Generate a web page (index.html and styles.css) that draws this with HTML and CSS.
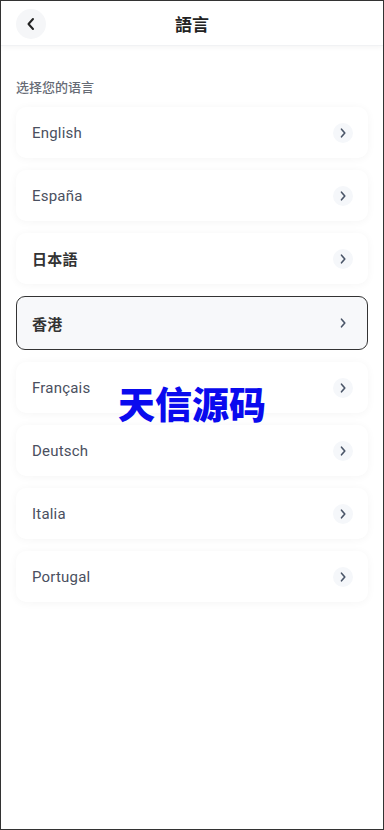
FILE: index.html
```html
<!DOCTYPE html>
<html lang="zh">
<head>
<meta charset="utf-8">
<link rel="stylesheet" href="styles.css">
</head>
<body>
<div class="frame">
  <header class="header">
    <div class="back">
      <svg width="12" height="14" viewBox="0 0 12 14"><path d="M8 2 L3.5 7 L8 12" fill="none" stroke="#222" stroke-width="2" stroke-linecap="round" stroke-linejoin="round"/></svg>
    </div>
    <h1 class="title">語言</h1>
  </header>
  <main class="content">
    <div class="label">选择您的语言</div>
    <ul class="list">
      <li class="item"><span class="name">English</span><span class="chev"><svg width="8" height="10" viewBox="0 0 8 10"><path d="M2.5 1.2 L5.8 5 L2.5 8.8" fill="none" stroke="#4a5568" stroke-width="1.6" stroke-linecap="round" stroke-linejoin="round"/></svg></span></li>
      <li class="item"><span class="name">España</span><span class="chev"><svg width="8" height="10" viewBox="0 0 8 10"><path d="M2.5 1.2 L5.8 5 L2.5 8.8" fill="none" stroke="#4a5568" stroke-width="1.6" stroke-linecap="round" stroke-linejoin="round"/></svg></span></li>
      <li class="item"><span class="name cjk">日本語</span><span class="chev"><svg width="8" height="10" viewBox="0 0 8 10"><path d="M2.5 1.2 L5.8 5 L2.5 8.8" fill="none" stroke="#4a5568" stroke-width="1.6" stroke-linecap="round" stroke-linejoin="round"/></svg></span></li>
      <li class="item selected"><span class="name cjk">香港</span><span class="chev"><svg width="8" height="10" viewBox="0 0 8 10"><path d="M2.5 1.2 L5.8 5 L2.5 8.8" fill="none" stroke="#4a5568" stroke-width="1.6" stroke-linecap="round" stroke-linejoin="round"/></svg></span></li>
      <li class="item"><span class="name">Français</span><span class="chev"><svg width="8" height="10" viewBox="0 0 8 10"><path d="M2.5 1.2 L5.8 5 L2.5 8.8" fill="none" stroke="#4a5568" stroke-width="1.6" stroke-linecap="round" stroke-linejoin="round"/></svg></span></li>
      <li class="item"><span class="name">Deutsch</span><span class="chev"><svg width="8" height="10" viewBox="0 0 8 10"><path d="M2.5 1.2 L5.8 5 L2.5 8.8" fill="none" stroke="#4a5568" stroke-width="1.6" stroke-linecap="round" stroke-linejoin="round"/></svg></span></li>
      <li class="item"><span class="name">Italia</span><span class="chev"><svg width="8" height="10" viewBox="0 0 8 10"><path d="M2.5 1.2 L5.8 5 L2.5 8.8" fill="none" stroke="#4a5568" stroke-width="1.6" stroke-linecap="round" stroke-linejoin="round"/></svg></span></li>
      <li class="item"><span class="name">Portugal</span><span class="chev"><svg width="8" height="10" viewBox="0 0 8 10"><path d="M2.5 1.2 L5.8 5 L2.5 8.8" fill="none" stroke="#4a5568" stroke-width="1.6" stroke-linecap="round" stroke-linejoin="round"/></svg></span></li>
    </ul>
  </main>
  <div class="watermark">天信源码</div>
</div>
</body>
</html>
```

FILE: styles.css
```css
* { box-sizing: border-box; }
html, body { margin: 0; padding: 0; }
body {
  width: 384px;
  height: 830px;
  font-family: Roboto, "Noto Sans CJK SC", sans-serif;
  background: #fff;
}
.frame {
  position: relative;
  width: 384px;
  height: 830px;
  border: 1px solid #333;
  background: #fff;
  overflow: hidden;
}
.header {
  height: 45px;
  display: flex;
  align-items: center;
  justify-content: center;
  position: relative;
  background: #fff;
  box-shadow: 0 1px 6px rgba(0,0,0,0.05);
  border-bottom: 1px solid #f1f2f4;
}
.back {
  position: absolute;
  left: 15px;
  top: 8px;
  width: 30px;
  height: 30px;
  border-radius: 50%;
  background: #f5f6f8;
  display: flex;
  align-items: center;
  justify-content: center;
}
.title {
  margin: 0;
  font-family: "Noto Sans CJK SC", sans-serif;
  font-size: 17px;
  font-weight: 700;
  color: #222;
  line-height: 1;
}
.content {
  padding: 32px 15px 0 15px;
}
.label {
  font-family: "Noto Sans CJK SC", sans-serif;
  font-size: 13px;
  font-weight: 500;
  color: #666b75;
  line-height: 18px;
  margin-bottom: 11px;
}
.list {
  list-style: none;
  margin: 0;
  padding: 0;
  display: flex;
  flex-direction: column;
  gap: 12px;
}
.item {
  height: 51px;
  background: #fff;
  border-radius: 10px;
  box-shadow: 0 1px 8px rgba(0,0,0,0.045);
  display: flex;
  align-items: center;
  justify-content: space-between;
  padding: 0 15px 0 16px;
}
.item.selected {
  height: 54px;
  background: #f7f8fa;
  border: 1px solid #333;
  border-radius: 9px;
  box-shadow: none;
  padding: 0 14px 0 15px;
}
.name {
  font-size: 15px;
  color: #4a5060;
  letter-spacing: 0.2px;
}
.name.cjk {
  font-family: "Noto Sans CJK SC", sans-serif;
  font-weight: 700;
  color: #333;
  font-size: 15px;
}
.chev {
  width: 20px;
  height: 20px;
  border-radius: 50%;
  background: #f5f7fa;
  display: flex;
  align-items: center;
  justify-content: center;
}
.selected .chev { background: transparent; }
.watermark {
  position: absolute;
  left: 117px;
  top: 382px;
  font-family: "Noto Sans CJK SC", sans-serif;
  font-weight: 900;
  font-size: 37px;
  line-height: 40px;
  color: #0a0aee;
  letter-spacing: 0;
}
```
